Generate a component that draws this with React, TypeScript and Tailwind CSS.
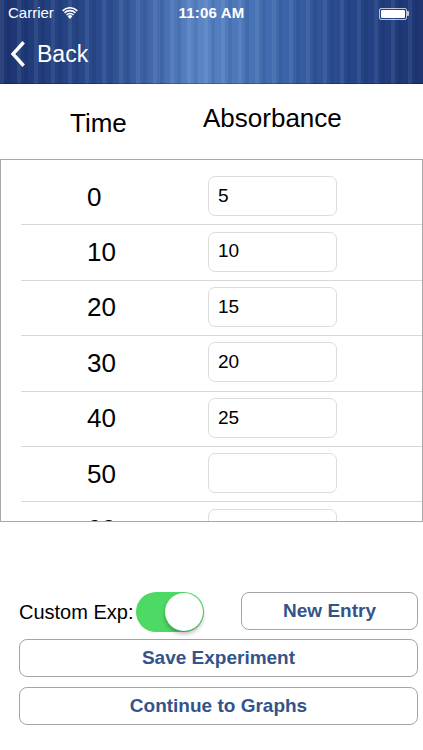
import { useState } from 'react';

const rows = [
  { time: '0', value: '5' },
  { time: '10', value: '10' },
  { time: '20', value: '15' },
  { time: '30', value: '20' },
  { time: '40', value: '25' },
  { time: '50', value: '' },
  { time: '60', value: '' },
];

function Wifi() {
  return (
    <svg width="16" height="12" viewBox="0 0 16 12" fill="white">
      <path d="M8 12 L5.6 9.3 A3.4 3.4 0 0 1 10.4 9.3 Z" />
      <path d="M3.9 7.4 A5.9 5.9 0 0 1 12.1 7.4 L11 8.6 A4.3 4.3 0 0 0 5 8.6 Z" />
      <path d="M2 5.3 A8.6 8.6 0 0 1 14 5.3 L12.9 6.5 A7 7 0 0 0 3.1 6.5 Z" />
      <path d="M0.1 3.2 A11.3 11.3 0 0 1 15.9 3.2 L14.8 4.4 A9.7 9.7 0 0 0 1.2 4.4 Z" />
    </svg>
  );
}

export default function App() {
  const [custom, setCustom] = useState(true);

  return (
    <div className="w-[423px] h-[750px] bg-white overflow-hidden font-['Liberation_Sans',Arial,sans-serif] text-black">
      {/* Header */}
      <div className="h-[84px] text-white bg-[repeating-linear-gradient(90deg,rgba(255,255,255,0.07)_0px,rgba(255,255,255,0.07)_4px,transparent_4px,transparent_7px,rgba(0,0,30,0.08)_7px,rgba(0,0,30,0.08)_11px,transparent_11px,transparent_17px),linear-gradient(90deg,#1c3572_0%,#2b4c8f_25%,#5a86c6_47%,#3f6aae_65%,#27478a_82%,#1d3673_100%)] shadow-[inset_0_-1px_0_rgba(0,0,0,0.25)]">
        <div className="h-[27px] flex items-center px-[8px] relative text-[15px]">
          <span>Carrier</span>
          <span className="ml-[8px] mt-[-1px]"><Wifi /></span>
          <span className="absolute left-0 right-0 text-center font-bold tracking-[0.2px] pointer-events-none">11:06 AM</span>
          <div className="ml-auto mr-[6px] flex items-center">
            <div className="w-[28px] h-[12px] border border-white/70 rounded-[2px] p-[1px]">
              <div className="w-full h-full bg-white rounded-[1px]" />
            </div>
            <div className="w-[2px] h-[5px] bg-white/70 rounded-r-[1px]" />
          </div>
        </div>
        <div className="h-[57px] flex items-center pl-[10px] pb-[3px]">
          <svg width="15" height="26" viewBox="0 0 15 26" fill="none" stroke="white" strokeWidth="3.4" strokeLinecap="square">
            <path d="M12.5 2.5 L3 13 L12.5 23.5" />
          </svg>
          <span className="ml-[12px] text-[23px]">Back</span>
        </div>
      </div>

      {/* Column headings */}
      <div className="h-[75px] relative">
        <span className="absolute left-[70px] top-[20px] text-[26px]">Time</span>
        <span className="absolute left-[203px] top-[15px] text-[26px]">Absorbance</span>
      </div>

      {/* Table */}
      <div className="h-[363px] border border-[#a8a8a8] overflow-hidden pt-[10px]">
        {rows.map((r) => (
          <div key={r.time} className="h-[55.4px] flex items-center border-b border-[#d8d8d8] ml-[20px]">
            <span className="w-[187px] pl-[66px] text-[26px]">{r.time}</span>
            <div className="w-[129px] h-[40px] mb-[2px] border border-[#dcdcdc] rounded-[7px] flex items-center pl-[9px] text-[19px]">
              {r.value}
            </div>
          </div>
        ))}
      </div>

      {/* Controls */}
      <div className="px-[19px] pt-[70px] pr-[5px]">
        <div className="flex items-center h-[40px]">
          <span className="text-[20px]">Custom Exp:</span>
          <button
            onClick={() => setCustom(!custom)}
            className={`ml-[3px] w-[68px] h-[40px] rounded-full p-[1px] flex items-center ${custom ? 'bg-[#4cd964] justify-end' : 'bg-[#e5e5e5] justify-start'}`}
          >
            <span className="w-[38px] h-[38px] rounded-full bg-white shadow-[0_3px_4px_rgba(0,0,0,0.28)]" />
          </button>
          <button className="ml-auto w-[177px] h-[38px] mb-[2px] border border-[#a4a4a4] rounded-[8px] text-[19px] font-bold text-[#34538a]">
            New Entry
          </button>
        </div>
        <button className="mt-[7px] w-[399px] h-[38px] border border-[#a4a4a4] rounded-[8px] text-[19px] font-bold text-[#34538a]">
          Save Experiment
        </button>
        <button className="mt-[10px] w-[399px] h-[38px] border border-[#a4a4a4] rounded-[8px] text-[19px] font-bold text-[#34538a]">
          Continue to Graphs
        </button>
      </div>
    </div>
  );
}
